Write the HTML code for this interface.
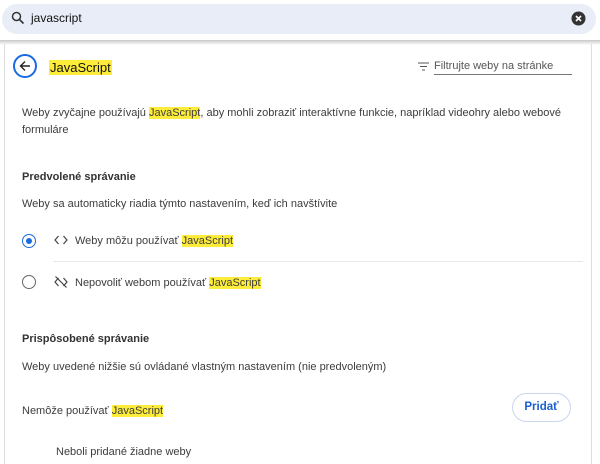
<!DOCTYPE html>
<html><head><meta charset="utf-8"><style>
body{margin:0;width:600px;height:455px;overflow:hidden;background:#fff;font-family:"Liberation Sans",sans-serif;color:#1f1f1f;position:relative}
.a{position:absolute;white-space:nowrap}
.hl{background:#fdec3a}
.t{font-size:11px;color:#3c3c3c}
</style></head><body>
<div class="a" style="left:2px;top:4px;width:594px;height:30px;border-radius:15px;background:#e9edf7"></div>
<svg class="a" style="left:11px;top:11px" width="14" height="14" viewBox="0 0 14 14"><circle cx="5.5" cy="5.5" r="4" fill="none" stroke="#333" stroke-width="1.5"/><path d="M8.5 8.5L12.5 12.5" stroke="#333" stroke-width="1.6"/></svg>
<div class="a" style="left:31px;top:11px;font-size:12px;color:#111">javascript</div>
<svg class="a" style="left:571px;top:11px" width="15" height="15" viewBox="0 0 15 15"><circle cx="7.5" cy="7.5" r="7" fill="#333"/><path d="M5 5L10 10M10 5L5 10" stroke="#fff" stroke-width="1.6"/></svg>
<div class="a" style="left:0;top:40px;width:600px;height:5px;background:linear-gradient(#c8c8c8,#fff)"></div>
<div class="a" style="left:4px;top:44px;width:586px;height:420px;border-left:1px solid #ddd;border-right:1px solid #ddd"></div>
<div class="a" style="left:13px;top:54px;width:24px;height:24px;border:2px solid #1a6be0;border-radius:50%;box-sizing:border-box"></div>
<svg class="a" style="left:19px;top:60px" width="12" height="12" viewBox="0 0 12 12"><path d="M11 6H1.5M6 1.5L1.5 6L6 10.5" fill="none" stroke="#222" stroke-width="1.4"/></svg>
<div class="a hl" style="left:49px;top:60px;font-size:13px;padding:0 1px;color:#111">JavaScript</div>
<svg class="a" style="left:418px;top:62px" width="11" height="9" viewBox="0 0 11 9"><path d="M0 1H11M2 4.5H9M4 8H7" stroke="#555" stroke-width="1.1"/></svg>
<div class="a t" style="left:434px;top:60px;color:#555">Filtrujte weby na stránke</div>
<div class="a" style="left:434px;top:74px;width:138px;height:1px;background:#777"></div>
<div class="a t" style="left:22px;top:107px">Weby zvyčajne používajú <span class="hl">JavaScript</span>, aby mohli zobraziť interaktívne funkcie, napríklad videohry alebo webové</div>
<div class="a t" style="left:22px;top:124px">formuláre</div>
<div class="a" style="left:22px;top:171px;font-size:11px;font-weight:bold;color:#333">Predvolené správanie</div>
<div class="a t" style="left:22px;top:198px">Weby sa automaticky riadia týmto nastavením, keď ich navštívite</div>
<div class="a" style="left:22px;top:234px;width:14px;height:14px;border:1.5px solid #1a6be0;border-radius:50%;box-sizing:border-box"></div>
<div class="a" style="left:26px;top:238px;width:6px;height:6px;background:#1a6be0;border-radius:50%"></div>
<svg class="a" style="left:54px;top:235px" width="14" height="10" viewBox="0 0 14 10"><path d="M4.5 1L1 5L4.5 9M9.5 1L13 5L9.5 9" fill="none" stroke="#444" stroke-width="1.2"/></svg>
<div class="a t" style="left:75px;top:235px">Weby môžu používať <span class="hl">JavaScript</span></div>
<div class="a" style="left:53px;top:261px;width:530px;height:1px;background:#e8e8e8"></div>
<div class="a" style="left:22px;top:275px;width:14px;height:14px;border:1.5px solid #666;border-radius:50%;box-sizing:border-box"></div>
<svg class="a" style="left:54px;top:276px" width="14" height="12" viewBox="0 0 14 12"><path d="M4.5 2L1 6L4.5 10M9.5 2L13 6L9.5 10M1.5 0.5L12.5 11.5" fill="none" stroke="#444" stroke-width="1.2"/></svg>
<div class="a t" style="left:75px;top:277px">Nepovoliť webom používať <span class="hl">JavaScript</span></div>
<div class="a" style="left:22px;top:333px;font-size:11px;font-weight:bold;color:#333">Prispôsobené správanie</div>
<div class="a t" style="left:22px;top:361px">Weby uvedené nižšie sú ovládané vlastným nastavením (nie predvoleným)</div>
<div class="a t" style="left:22px;top:405px">Nemôže používať <span class="hl">JavaScript</span></div>
<div class="a" style="left:512px;top:393px;width:59px;height:29px;border:1px solid #c9d6ee;border-radius:15px;box-sizing:border-box;color:#1a5fd0;font-size:11.5px;font-weight:bold;text-align:center;line-height:27px">Pridať</div>
<div class="a t" style="left:56px;top:446px">Neboli pridané žiadne weby</div>
</body></html>
